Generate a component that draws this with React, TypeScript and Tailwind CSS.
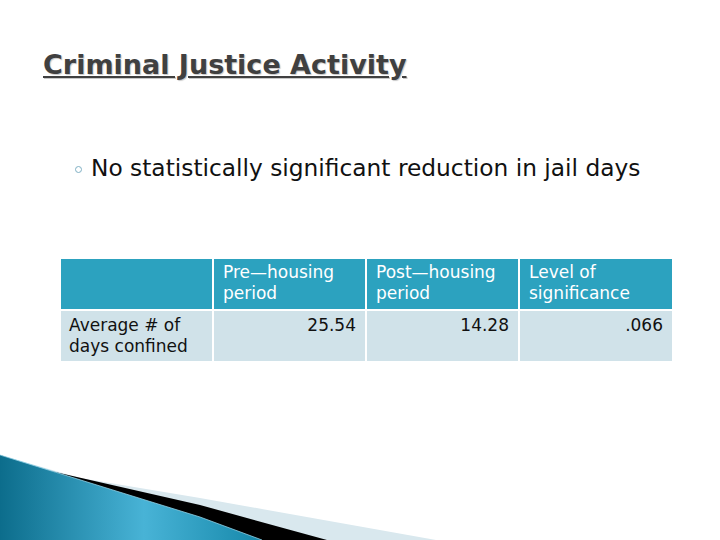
import React from 'react';

const font = { fontFamily: '"DejaVu Sans", Verdana, sans-serif' };

const Corner: React.FC = () => (
    <svg className="absolute left-0 bottom-0" width="440" height="90" viewBox="0 450 440 90">
        <defs>
            <linearGradient id="blueWedge" x1="0" y1="0" x2="1" y2="0">
                <stop offset="0" stopColor="#0c6d8c" />
                <stop offset="0.55" stopColor="#48b3d6" />
                <stop offset="1" stopColor="#1688aa" />
            </linearGradient>
        </defs>
        <polygon points="80,478 200,498 436,540 0,540 0,455" fill="#d9e8ee" />
        <polygon points="33,467 200,505 327,540 0,540 0,455" fill="#000000" />
        <polygon points="0,455 200,517 262,540 0,540" fill="url(#blueWedge)" />
        <polyline points="0,455 200,517 262,540" fill="none" stroke="#8fd0e6" strokeWidth="0.8" />
    </svg>
);

export default function App() {
    return (
        <div className="relative w-[720px] h-[540px] bg-white overflow-hidden" style={font}>
            <h1 className="absolute left-[43px] top-[47px] text-[27px] font-bold underline text-[#404040] [text-shadow:1px_1px_1px_#c8c8c8] leading-[36px]">
                Criminal Justice Activity
            </h1>

            <div className="pt-[151px] pl-[75px] flex items-center gap-[9px]">
                <span className="w-[7px] h-[7px] rounded-full border border-[#7fb0c4] mt-[2px]" />
                <span className="text-[23.3px] text-[#111]">No statistically significant reduction in jail days</span>
            </div>

            <div className="mt-[73px] ml-[61px] w-[611px] grid grid-cols-[151px_151px_151px_152px] gap-[2px] text-[17px] leading-[21px]">
                <div className="bg-[#2ca2bf] h-[50px]" />
                <div className="bg-[#2ca2bf] h-[50px] px-[9px] pt-[3px] text-white">Pre—housing<br />period</div>
                <div className="bg-[#2ca2bf] h-[50px] px-[9px] pt-[3px] text-white">Post—housing<br />period</div>
                <div className="bg-[#2ca2bf] h-[50px] px-[9px] pt-[3px] text-white">Level of<br />significance</div>
                <div className="bg-[#d0e2e9] h-[50px] px-[8px] pt-[4px] text-[#111]">Average # of<br />days confined</div>
                <div className="bg-[#d0e2e9] h-[50px] px-[9px] pt-[4px] text-[#111] text-right">25.54</div>
                <div className="bg-[#d0e2e9] h-[50px] px-[9px] pt-[4px] text-[#111] text-right">14.28</div>
                <div className="bg-[#d0e2e9] h-[50px] px-[9px] pt-[4px] text-[#111] text-right">.066</div>
            </div>

            <Corner />
        </div>
    );
}
